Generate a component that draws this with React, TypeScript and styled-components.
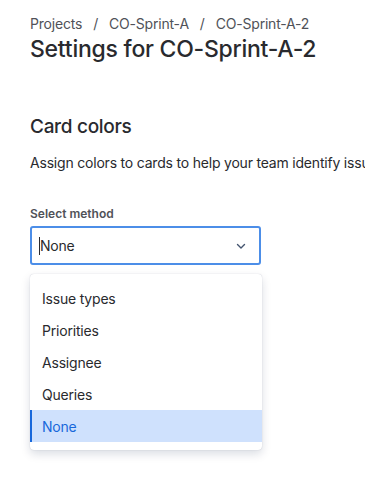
import React from 'react';
import styled, { createGlobalStyle } from 'styled-components';

const GlobalStyle = createGlobalStyle`
  html, body {
    margin: 0;
    padding: 0;
    background: #ffffff;
    overflow: hidden;
  }
  body {
    font-family: Inter, "Noto Sans", "Liberation Sans", sans-serif;
    color: #292a2e;
    letter-spacing: -0.2px;
  }
`;

const Page = styled.div`
  width: 365px;
  height: 482px;
  box-sizing: border-box;
  padding: 14px 0 0 30px;
  overflow: hidden;
`;

const Breadcrumbs = styled.nav`
  display: flex;
  align-items: center;
  height: 18px;
  font-size: 14px;
  color: #505258;
  white-space: nowrap;
`;

const Sep = styled.span`
  margin: 0 11px;
`;

const Title = styled.h1`
  margin: 3px 0 0;
  font-size: 23px;
  line-height: 28px;
  font-weight: 500;
  letter-spacing: -0.25px;
  color: #292a2e;
  white-space: nowrap;
`;

const SectionTitle = styled.h2`
  margin: 52px 0 0;
  font-size: 19px;
  line-height: 24px;
  font-weight: 500;
  letter-spacing: -0.3px;
`;

const Description = styled.p`
  margin: 14px 0 0;
  font-size: 14px;
  line-height: 20px;
  white-space: nowrap;
`;

const Label = styled.label`
  display: block;
  margin: 33px 0 0;
  font-size: 12px;
  line-height: 16px;
  font-weight: 600;
  letter-spacing: 0;
  color: #505258;
`;

const SelectBox = styled.div`
  margin-top: 4px;
  width: 231px;
  height: 39px;
  box-sizing: border-box;
  border: 2px solid #4c8ee8;
  border-radius: 3px;
  display: flex;
  align-items: center;
  padding: 0 12px 0 7px;
  font-size: 14px;
`;

const Caret = styled.span`
  width: 1px;
  height: 18px;
  background: #292a2e;
`;

const Value = styled.span`
  flex: 1;
`;

const Menu = styled.ul`
  list-style: none;
  margin: 9px 0 0;
  padding: 8px 0;
  width: 232px;
  box-sizing: border-box;
  border-radius: 4px;
  background: #fff;
  box-shadow: 0 4px 10px rgba(9, 30, 66, 0.15), 0 0 1px rgba(9, 30, 66, 0.25);
`;

const Item = styled.li<{ selected?: boolean }>`
  height: 32px;
  display: flex;
  align-items: center;
  padding-left: 12px;
  font-size: 14px;
  color: ${(p) => (p.selected ? '#1868db' : '#292a2e')};
  background: ${(p) => (p.selected ? '#cfe1fd' : 'transparent')};
  box-shadow: ${(p) => (p.selected ? 'inset 2px 0 0 #1868db' : 'none')};
`;

const Chevron = () => (
  <svg width="12" height="12" viewBox="0 0 12 12" fill="none">
    <path d="M2.5 4.5 6 8l3.5-3.5" stroke="#44546f" strokeWidth="1.4" strokeLinecap="round" strokeLinejoin="round" />
  </svg>
);

const options = ['Issue types', 'Priorities', 'Assignee', 'Queries', 'None'];

const App = () => {
  const selected = 'None';
  return (
    <Page>
      <GlobalStyle />
      <Breadcrumbs>
        <span>Projects</span>
        <Sep>/</Sep>
        <span>CO-Sprint-A</span>
        <Sep>/</Sep>
        <span>CO-Sprint-A-2</span>
      </Breadcrumbs>
      <Title>Settings for CO-Sprint-A-2</Title>
      <SectionTitle>Card colors</SectionTitle>
      <Description>Assign colors to cards to help your team identify issues at a glance.</Description>
      <Label>Select method</Label>
      <SelectBox>
        <Caret />
        <Value>None</Value>
        <Chevron />
      </SelectBox>
      <Menu>
        {options.map((o) => (
          <Item key={o} selected={o === selected}>
            {o}
          </Item>
        ))}
      </Menu>
    </Page>
  );
};

export default App;
